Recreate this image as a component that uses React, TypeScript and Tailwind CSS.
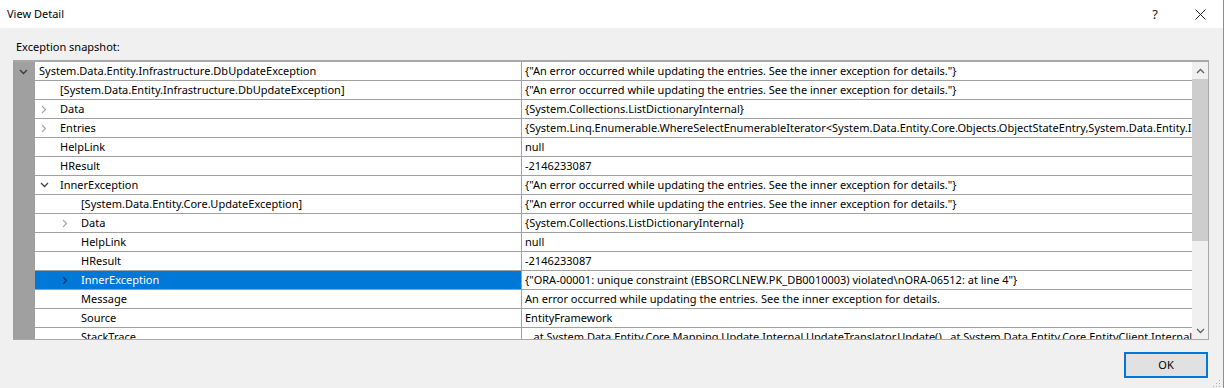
import React from "react";

type Row = {
  level: 0 | 1 | 2;
  chev?: "down" | "right";
  name: string;
  value: string;
  selected?: boolean;
};

const ERR = '{"An error occurred while updating the entries. See the inner exception for details."}';

const rows: Row[] = [
  { level: 0, chev: "down", name: "System.Data.Entity.Infrastructure.DbUpdateException", value: ERR },
  { level: 1, name: "[System.Data.Entity.Infrastructure.DbUpdateException]", value: ERR },
  { level: 1, chev: "right", name: "Data", value: "{System.Collections.ListDictionaryInternal}" },
  {
    level: 1,
    chev: "right",
    name: "Entries",
    value:
      "{System.Linq.Enumerable.WhereSelectEnumerableIterator<System.Data.Entity.Core.Objects.ObjectStateEntry,System.Data.Entity.Infrastructure.DbEntityEntry>}",
  },
  { level: 1, name: "HelpLink", value: "null" },
  { level: 1, name: "HResult", value: "-2146233087" },
  { level: 1, chev: "down", name: "InnerException", value: ERR },
  { level: 2, name: "[System.Data.Entity.Core.UpdateException]", value: ERR },
  { level: 2, chev: "right", name: "Data", value: "{System.Collections.ListDictionaryInternal}" },
  { level: 2, name: "HelpLink", value: "null" },
  { level: 2, name: "HResult", value: "-2146233087" },
  {
    level: 2,
    chev: "right",
    name: "InnerException",
    value: '{"ORA-00001: unique constraint (EBSORCLNEW.PK_DB0010003) violated\\nORA-06512: at line 4"}',
    selected: true,
  },
  { level: 2, name: "Message", value: "An error occurred while updating the entries. See the inner exception for details." },
  { level: 2, name: "Source", value: "EntityFramework" },
  {
    level: 2,
    name: "StackTrace",
    value:
      "   at System.Data.Entity.Core.Mapping.Update.Internal.UpdateTranslator.Update()   at System.Data.Entity.Core.EntityClient.Internal.EntityAdapter.<Update>b__2(UpdateTranslator ut)",
  },
];

function Chevron({ dir, color }: { dir: "down" | "right"; color: string }) {
  return dir === "down" ? (
    <svg width="9" height="6" viewBox="0 0 9 6">
      <path d="M1 1 L4.5 4.5 L8 1" fill="none" stroke={color} strokeWidth="1.3" />
    </svg>
  ) : (
    <svg width="6" height="9" viewBox="0 0 6 9">
      <path d="M1 1 L4.5 4.5 L1 8" fill="none" stroke={color} strokeWidth="1.2" />
    </svg>
  );
}

const indentClass: Record<number, string> = {
  0: "pl-[4px]",
  1: "pl-[1px]",
  2: "pl-[22px]",
};

function GridRow({ r }: { r: Row }) {
  const chevColor = r.selected ? "#163a60" : r.chev === "down" ? "#404040" : "#a6a6a6";
  return (
    <div className="flex h-[19px] shrink-0">
      <div className="w-[22px] shrink-0 bg-[#a0a0a0] flex items-center">
        <div className="w-[20px] flex justify-center">
          {r.level === 0 && r.chev ? <Chevron dir={r.chev} color="#3a3a3a" /> : null}
        </div>
      </div>
      <div
        className={`w-[487px] shrink-0 flex items-center border-b border-r border-[#a0a0a0] ${indentClass[r.level]} ${
          r.selected ? "bg-[#0078d7] text-white" : "bg-white"
        }`}
      >
        {r.level > 0 ? (
          <div className="w-[16px] shrink-0 flex justify-center items-center mr-[8px]">
            {r.chev ? <Chevron dir={r.chev} color={chevColor} /> : null}
          </div>
        ) : null}
        <span className="whitespace-pre">{r.name}</span>
      </div>
      <div className="flex-1 min-w-0 flex items-center bg-white border-b border-[#a0a0a0] pl-[3px] overflow-hidden">
        <span className="whitespace-pre">{r.value}</span>
      </div>
    </div>
  );
}

export default function App() {
  return (
    <div className="w-[1227px] h-[388px] bg-white flex overflow-hidden text-[11px] text-black font-['Noto_Sans',sans-serif] leading-[16px]">
      <div className="w-[1224px] h-full bg-[#f0f0f0] flex flex-col border-r border-[#5a9ad8] shrink-0">
        {/* Title bar */}
        <div className="h-[28px] bg-white flex items-center shrink-0">
          <span className="pl-[7px] text-[11px]">View Detail</span>
          <div className="flex-1" />
          <span className="w-[20px] text-center text-[13px] text-[#222]">?</span>
          <div className="w-[25px]" />
          <div className="w-[20px] flex justify-center">
            <svg width="11" height="11" viewBox="0 0 11 11">
              <path d="M0.5 0.5 L10.5 10.5 M10.5 0.5 L0.5 10.5" stroke="#222" strokeWidth="1" />
            </svg>
          </div>
          <div className="w-[13px]" />
        </div>

        {/* Body */}
        <div className="flex flex-col pl-[13px] flex-1">
          <div className="mt-[11px] pl-[3px] h-[16px]">Exception snapshot:</div>
          <div className="mt-[5px] w-[1196px] h-[280px] flex border-t-2 border-b border-r border-[#a8a8a8] overflow-hidden">
            <div className="flex-1 min-w-0 flex flex-col overflow-hidden">
              {rows.map((r, i) => (
                <GridRow key={i} r={r} />
              ))}
            </div>
            <div className="w-[16px] shrink-0 bg-[#f0f0f0] flex flex-col">
              <div className="h-[17px] flex items-center justify-center">
                <svg width="9" height="6" viewBox="0 0 9 6">
                  <path d="M1 5 L4.5 1.5 L8 5" fill="none" stroke="#606060" strokeWidth="1.3" />
                </svg>
              </div>
              <div className="h-[162px] bg-[#cdcdcd]" />
              <div className="flex-1" />
              <div className="h-[17px] flex items-center justify-center">
                <svg width="9" height="6" viewBox="0 0 9 6">
                  <path d="M1 1 L4.5 4.5 L8 1" fill="none" stroke="#606060" strokeWidth="1.3" />
                </svg>
              </div>
            </div>
          </div>
          <div className="flex justify-end pr-[15px] mt-[12px] relative">
            <button className="w-[84px] h-[26px] bg-[#e1e1e1] border-2 border-[#0078d7] flex items-center justify-center text-[11px] text-black">
              OK
            </button>
          </div>
          <div className="flex-1" />
          <div className="flex justify-end pr-[2px] pb-[2px]">
            <svg width="10" height="10" viewBox="0 0 10 10">
              <rect x="8" y="2" width="1" height="1" fill="#b0b0b0" />
              <rect x="5" y="5" width="1" height="1" fill="#b0b0b0" />
              <rect x="8" y="5" width="1" height="1" fill="#b0b0b0" />
              <rect x="2" y="8" width="1" height="1" fill="#b0b0b0" />
              <rect x="5" y="8" width="1" height="1" fill="#b0b0b0" />
              <rect x="8" y="8" width="1" height="1" fill="#b0b0b0" />
            </svg>
          </div>
        </div>
      </div>
    </div>
  );
}
